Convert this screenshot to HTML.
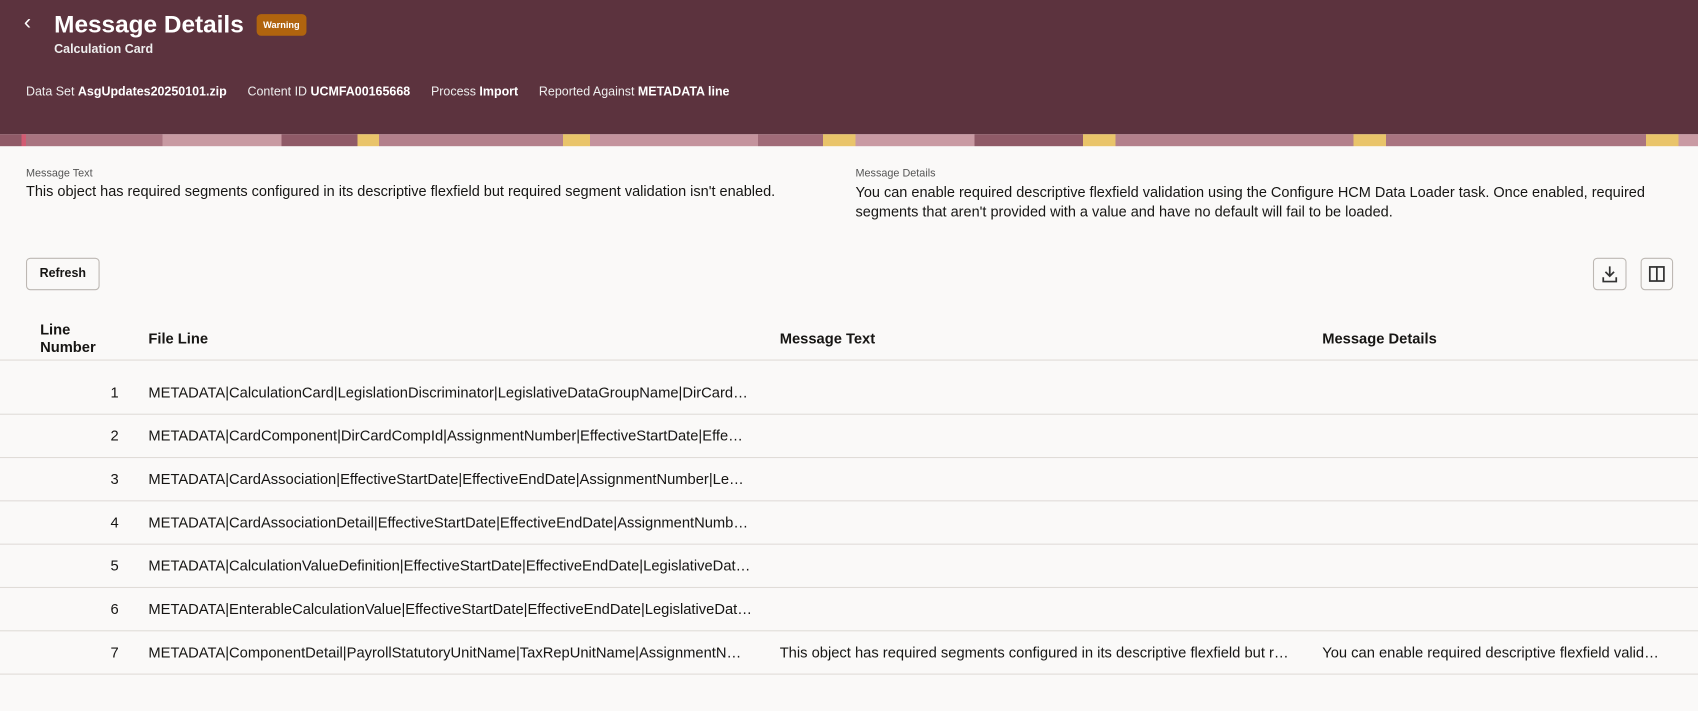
<!DOCTYPE html>
<html><head><style>
*{margin:0;padding:0;box-sizing:border-box}
html,body{width:1698px;height:711px;overflow:hidden;background:#faf9f8}
#w{width:1568px;height:657px;transform:scale(1.08291);transform-origin:0 0;position:relative;font-family:"Liberation Sans",sans-serif;color:#161513}
.hdr{position:absolute;left:0;top:0;width:1568px;height:124px;background:#5c333e;color:#fff}
.strip{position:absolute;left:0;top:124px;width:1568px;height:11px;background:linear-gradient(90deg,#8f5a67 0 20px,#d25b72 20px 24px,#a97480 24px 150px,#c89aa2 150px 260px,#8f5a67 260px 330px,#e9c46a 330px 350px,#b3808b 350px 520px,#e9c46a 520px 545px,#c4939d 545px 700px,#a06b78 700px 760px,#e9c46a 760px 790px,#c99aa3 790px 900px,#8f5a67 900px 1000px,#e9c46a 1000px 1030px,#b3808b 1030px 1250px,#e9c46a 1250px 1280px,#a97480 1280px 1520px,#e9c46a 1520px 1550px,#c99aa3 1550px)}
.abs{position:absolute;white-space:nowrap}
.row{position:absolute;left:0;width:1568px;height:40px;border-bottom:1px solid #e0dcd8}
.cell{position:absolute;top:12px;font-size:13.6px;white-space:nowrap}
.btn{position:absolute;border:1px solid #bdb8b3;border-radius:4px;background:#faf9f8}
</style></head><body><div id="w">
<div class="hdr">
 <div class="abs" style="left:22px;top:10px;font-size:20px">&#8249;</div>
 <div class="abs" style="left:50px;top:10px;font-size:22.5px;font-weight:bold">Message Details</div>
 <div class="abs" style="left:237px;top:13px;background:#b0640e;border-radius:4px;font-size:8.5px;padding:5px 6px;font-weight:bold">Warning</div>
 <div class="abs" style="left:50px;top:40px;font-size:11.5px;font-weight:bold;color:#eee">Calculation Card</div>
 <div class="abs" style="left:24px;top:79px;font-size:11.5px;color:#eee">Data Set <b style="color:#fff">AsgUpdates20250101.zip</b>&nbsp;&nbsp;&nbsp;&nbsp;&nbsp; Content ID <b style="color:#fff">UCMFA00165668</b>&nbsp;&nbsp;&nbsp;&nbsp;&nbsp; Process <b style="color:#fff">Import</b>&nbsp;&nbsp;&nbsp;&nbsp;&nbsp; Reported Against <b style="color:#fff">METADATA line</b></div>
</div>
<div class="strip"></div>
<div class="abs" style="left:24px;top:155px;font-size:10px;color:#555">Message Text</div>
<div class="abs" style="left:24px;top:169px;font-size:13.4px">This object has required segments configured in its descriptive flexfield but required segment validation isn't enabled.</div>
<div class="abs" style="left:790px;top:155px;font-size:10px;color:#555">Message Details</div>
<div class="abs" style="left:790px;top:169px;font-size:13.4px;white-space:normal;width:745px;line-height:18px">You can enable required descriptive flexfield validation using the Configure HCM Data Loader task. Once enabled, required segments that aren't provided with a value and have no default will fail to be loaded.</div>
<div class="btn" style="left:24px;top:238px;width:68px;height:30px;font-size:11.5px;font-weight:bold;text-align:center;line-height:28px">Refresh</div>
<div class="btn" style="left:1471px;top:238px;width:31px;height:30px"><svg width="29" height="28" viewBox="0 0 29 28"><path d="M14.5 7v9M10.5 12l4 4 4-4M8.5 17v4h12v-4" stroke="#333" stroke-width="1.6" fill="none"/></svg></div>
<div class="btn" style="left:1515px;top:238px;width:30px;height:30px"><svg width="28" height="28" viewBox="0 0 28 28"><rect x="7.5" y="7.5" width="13" height="13" stroke="#333" stroke-width="1.6" fill="none"/><path d="M14 7.5v13" stroke="#333" stroke-width="1.6"/></svg></div>
<div class="row" style="top:293px">
 <div class="cell" style="left:37px;top:4px;font-weight:bold;line-height:16px">Line<br>Number</div>
 <div class="cell" style="left:137px;font-weight:bold">File Line</div>
 <div class="cell" style="left:720px;font-weight:bold">Message Text</div>
 <div class="cell" style="left:1221px;font-weight:bold">Message Details</div>
</div>
<div class="row" style="top:343px"><div class="cell" style="left:102px">1</div><div class="cell" style="left:137px">METADATA|CalculationCard|LegislationDiscriminator|LegislativeDataGroupName|DirCard…</div></div>
<div class="row" style="top:383px"><div class="cell" style="left:102px">2</div><div class="cell" style="left:137px">METADATA|CardComponent|DirCardCompId|AssignmentNumber|EffectiveStartDate|Effe…</div></div>
<div class="row" style="top:423px"><div class="cell" style="left:102px">3</div><div class="cell" style="left:137px">METADATA|CardAssociation|EffectiveStartDate|EffectiveEndDate|AssignmentNumber|Le…</div></div>
<div class="row" style="top:463px"><div class="cell" style="left:102px">4</div><div class="cell" style="left:137px">METADATA|CardAssociationDetail|EffectiveStartDate|EffectiveEndDate|AssignmentNumb…</div></div>
<div class="row" style="top:503px"><div class="cell" style="left:102px">5</div><div class="cell" style="left:137px">METADATA|CalculationValueDefinition|EffectiveStartDate|EffectiveEndDate|LegislativeDat…</div></div>
<div class="row" style="top:543px"><div class="cell" style="left:102px">6</div><div class="cell" style="left:137px">METADATA|EnterableCalculationValue|EffectiveStartDate|EffectiveEndDate|LegislativeDat…</div></div>
<div class="row" style="top:583px"><div class="cell" style="left:102px">7</div><div class="cell" style="left:137px">METADATA|ComponentDetail|PayrollStatutoryUnitName|TaxRepUnitName|AssignmentN…</div><div class="cell" style="left:720px">This object has required segments configured in its descriptive flexfield but r…</div><div class="cell" style="left:1221px">You can enable required descriptive flexfield valid…</div></div>
</div></body></html>
